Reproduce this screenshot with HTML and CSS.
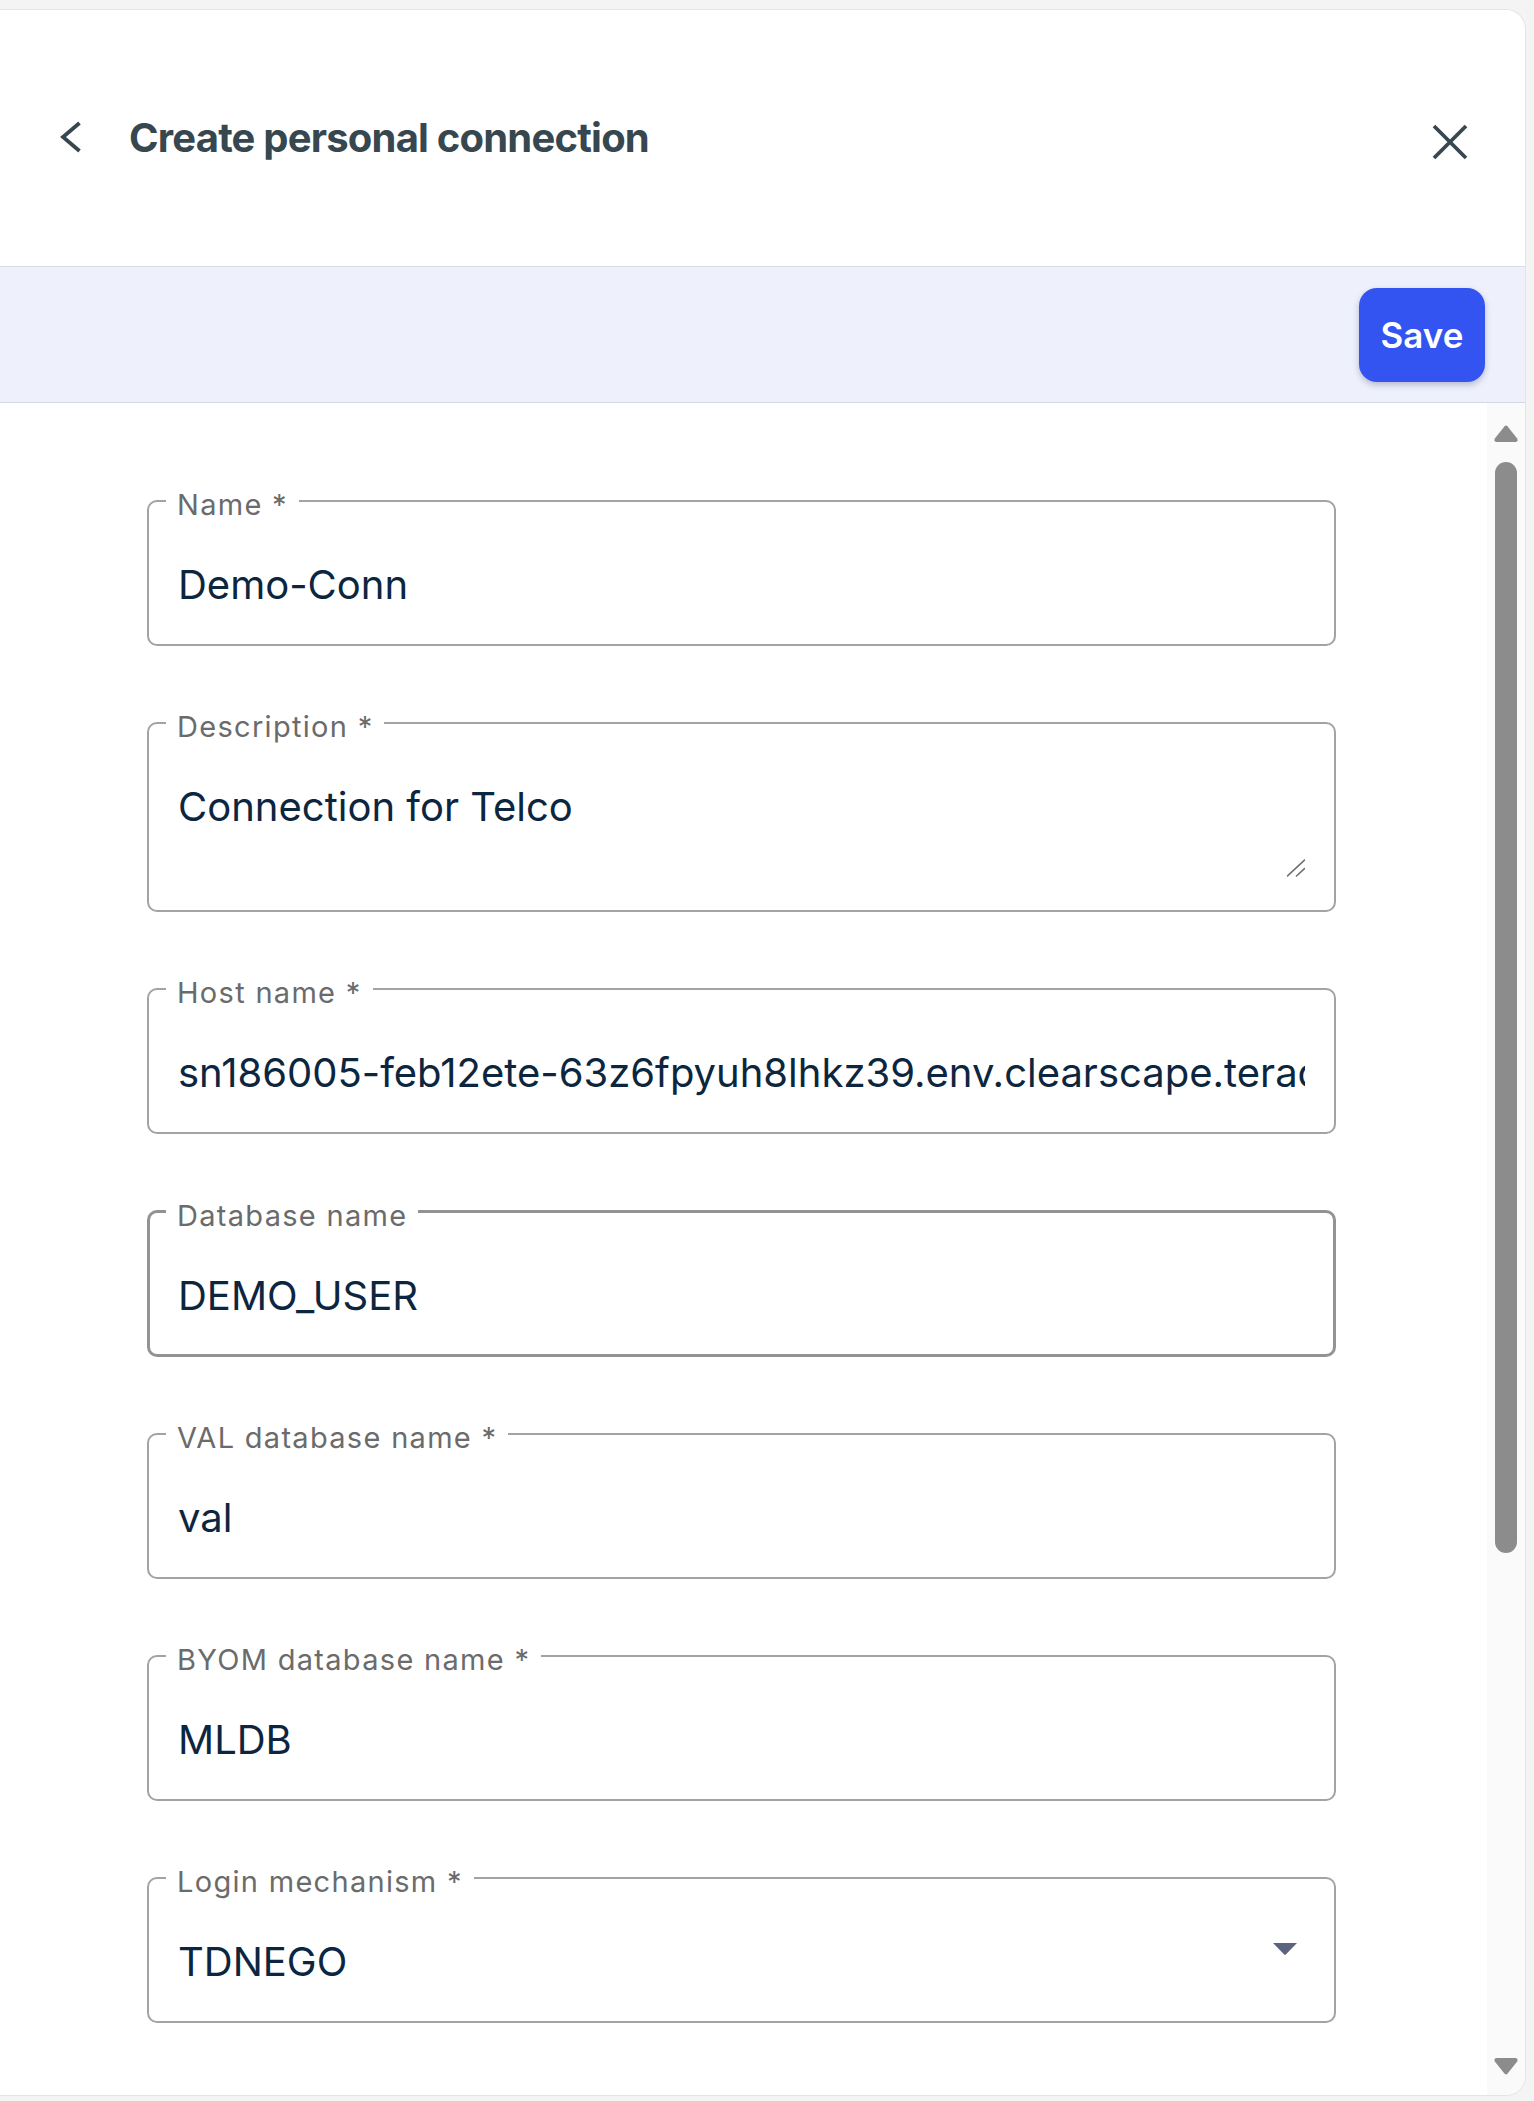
FILE: index.html
```html
<!DOCTYPE html>
<html lang="en">
<head>
<meta charset="utf-8">
<title>Create personal connection</title>
<link rel="stylesheet" href="styles.css">
</head>
<body>
<div class="card">
  <header class="head">
    <button class="icon-btn back" aria-label="Back">
      <svg width="22" height="32" viewBox="0 0 22 32"><path d="M19.5 2 L3 16 L19.5 30" fill="none" stroke="#37474f" stroke-width="3.8"/></svg>
    </button>
    <h1 class="title">Create personal connection</h1>
    <button class="icon-btn close" aria-label="Close">
      <svg width="36" height="36" viewBox="0 0 36 36"><path d="M2 2 L34 34 M34 2 L2 34" fill="none" stroke="#37474f" stroke-width="3.8"/></svg>
    </button>
  </header>
  <div class="toolbar">
    <button class="save" type="button">Save</button>
  </div>
  <div class="body">
    <form class="form">
      <fieldset class="field">
        <legend>Name *</legend>
        <div class="value">Demo-Conn</div>
      </fieldset>
      <fieldset class="field field--area">
        <legend>Description *</legend>
        <div class="value">Connection for Telco</div>
        <div class="resize-row">
          <svg width="18" height="18" viewBox="0 0 18 18"><path d="M0.5 17 L17.5 1 M9.5 17 L17.5 9.5" fill="none" stroke="#6f6f6f" stroke-width="1.6" stroke-linecap="round"/></svg>
        </div>
      </fieldset>
      <fieldset class="field">
        <legend>Host name *</legend>
        <div class="value">sn186005-feb12ete-63z6fpyuh8lhkz39.env.clearscape.teradata.com</div>
      </fieldset>
      <fieldset class="field field--active">
        <legend>Database name</legend>
        <div class="value">DEMO_USER</div>
      </fieldset>
      <fieldset class="field">
        <legend>VAL database name *</legend>
        <div class="value">val</div>
      </fieldset>
      <fieldset class="field">
        <legend>BYOM database name *</legend>
        <div class="value">MLDB</div>
      </fieldset>
      <fieldset class="field">
        <legend>Login mechanism *</legend>
        <div class="value select-row">
          <span class="select-text">TDNEGO</span>
          <svg class="caret" width="24" height="12" viewBox="0 0 24 12"><path d="M0 0 H24 L12.8 11.4 Q12 12 11.2 11.4 Z" fill="#5a6380"/></svg>
        </div>
      </fieldset>
    </form>
    <div class="scrollbar" aria-hidden="true">
      <svg width="24" height="17" viewBox="0 0 24 17"><path d="M10.6 1.2 Q12 -0.2 13.4 1.2 L23.2 13.6 Q24.4 17 21.5 17 H2.5 Q-0.4 17 0.8 13.6 Z" fill="#8c8c8c"/></svg>
      <div class="thumb"></div>
      <div class="spacer"></div>
      <svg width="24" height="18" viewBox="0 0 24 18"><path d="M10.6 16.8 Q12 18.2 13.4 16.8 L23.2 4.4 Q24.4 1 21.5 1 H2.5 Q-0.4 1 0.8 4.4 Z" fill="#8c8c8c"/></svg>
    </div>
  </div>
</div>
</body>
</html>
```

FILE: styles.css
```css
* {
  box-sizing: border-box;
}

html, body {
  margin: 0;
  padding: 0;
}

body {
  background: #f4f4f4;
  font-family: Inter, "Noto Sans", "Liberation Sans", sans-serif;
  width: 1534px;
  height: 2101px;
  overflow: hidden;
}

.card {
  width: 1526px;
  height: 2087px;
  margin-top: 9px;
  background: #ffffff;
  border: 1px solid #e4e4e6;
  border-left: none;
  border-radius: 0 20px 20px 0;
  display: flex;
  flex-direction: column;
  overflow: hidden;
}

/* Header */
.head {
  flex: none;
  height: 257px;
  border-bottom: 1px solid #dcdde4;
  display: flex;
  align-items: center;
  padding: 0 57px 0 60px;
}

.icon-btn {
  border: none;
  background: transparent;
  padding: 0;
  margin: 0;
  display: flex;
  cursor: pointer;
}

.back {
  margin-top: -2px;
}

.close {
  margin-top: 8px;
}

.title {
  flex: 1;
  margin: 0 0 0 47px;
  font-size: 40px;
  font-weight: 650;
  letter-spacing: -0.8px;
  color: #37474f;
  line-height: 48px;
}

/* Toolbar */
.toolbar {
  flex: none;
  height: 136px;
  background: #eef0fc;
  border-bottom: 1px solid #d5d7e0;
  display: flex;
  align-items: center;
  justify-content: flex-end;
  padding-right: 40px;
}

.save {
  width: 126px;
  height: 94px;
  border: none;
  border-radius: 18px;
  background: #3354f0;
  color: #ffffff;
  font-family: inherit;
  font-size: 35px;
  font-weight: 600;
  box-shadow: 0 3px 6px rgba(40, 50, 90, 0.28);
  cursor: pointer;
}

/* Body */
.body {
  flex: 1;
  min-height: 0;
  display: flex;
}

.form {
  flex: 1;
  min-width: 0;
  padding: 77px 0 0 147px;
  overflow: hidden;
}

.field {
  width: 1189px;
  min-width: 0;
  margin: 0 0 56px 0;
  padding: 0 29px 35px;
  border: 2px solid #a3a3a3;
  border-radius: 10px;
}

.field legend {
  margin-left: -12px;
  padding: 8px 11px 0;
  font-size: 29px;
  line-height: 34px;
  color: #6b6b6b;
  letter-spacing: 1.3px;
}

.field--active {
  border-width: 3px;
  border-color: #939393;
  padding: 0 28px 34px;
}

.field--active legend {
  padding-top: 9px;
}

.field--area {
  padding-bottom: 33px;
}

.value {
  padding-top: 39px;
  font-size: 40px;
  line-height: 48px;
  color: #0d2640;
  white-space: nowrap;
  overflow: hidden;
}

.resize-row {
  display: flex;
  justify-content: flex-end;
  margin-top: 28px;
  height: 18px;
}

.select-row {
  display: flex;
}

.select-text {
  flex: 1;
}

.caret {
  flex: none;
  margin: 5px 8px 0 0;
}

/* Scrollbar */
.scrollbar {
  flex: none;
  width: 38px;
  background: #fafafa;
  display: flex;
  flex-direction: column;
  align-items: center;
  padding: 22px 0 20px;
}

.thumb {
  width: 22px;
  height: 1091px;
  margin-top: 20px;
  border-radius: 11px;
  background: #8c8c8c;
}

.spacer {
  flex: 1;
}
```
